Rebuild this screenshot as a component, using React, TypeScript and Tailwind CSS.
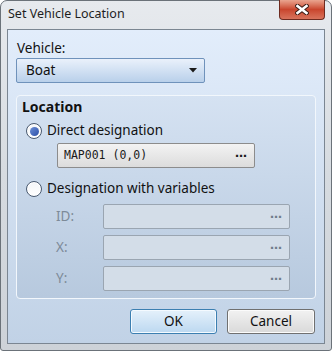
import React from 'react'

const ui = { fontFamily: '"Noto Sans", "Open Sans", sans-serif' }
const mono = { fontFamily: '"DejaVu Sans Mono", "Liberation Mono", monospace' }
const dots = { fontFamily: '"DejaVu Sans", sans-serif' }

function Radio({ checked }: { checked: boolean }) {
  return (
    <div className="w-[16px] h-[16px] rounded-full border border-[#4a5a70] bg-gradient-to-b from-[#f4f6f9] to-[#ffffff] flex items-center justify-center shadow-[inset_0_0_0_1px_#ffffff]">
      {checked && (
        <div className="w-[9px] h-[9px] rounded-full bg-gradient-to-br from-[#6c8fd8] to-[#2d4fa6]" />
      )}
    </div>
  )
}

function RefField({ text, disabled }: { text?: string; disabled?: boolean }) {
  return (
    <div
      className={`h-[25px] flex items-center justify-between pl-[6px] pr-[7px] rounded-[2px] border ${
        disabled
          ? 'border-[#9aa5b1] bg-[#d3dde8] text-[#6f7c8a]'
          : 'border-[#8c8c8c] bg-gradient-to-b from-[#f3f3f3] to-[#dcdcdc] text-[#1a1a1a]'
      }`}
    >
      <span className="text-[11.5px] leading-none" style={mono}>
        {text}
      </span>
      <span className="pb-[5px] text-[12px] font-bold leading-none" style={dots}>
        …
      </span>
    </div>
  )
}

export default function App() {
  return (
    <div className="w-[332px] h-[351px] bg-white" style={ui}>
      <div className="w-full h-full border border-[#6b7279] rounded-t-[7px] rounded-b-[3px] px-[6px] pb-[6px] flex flex-col bg-gradient-to-b from-[#e7eaee] via-[#d6dbe0] to-[#cdd2d8]">
        {/* Title bar */}
        <div className="h-[28px] flex items-start justify-between">
          <span className="pl-[1px] pt-[5px] text-[12.5px] leading-[16px] text-[#1e1e1e]">Set Vehicle Location</span>
          <div className="-mt-[1px] w-[46px] h-[20px] rounded-b-[4px] border border-[#6e2b20] border-t-0 bg-gradient-to-b from-[#e9a48f] via-[#c9452d] to-[#d8735c] flex items-center justify-center">
            <svg width="14" height="11" viewBox="0 0 14 11">
              <path d="M2.5 2 L11.5 9 M11.5 2 L2.5 9" stroke="#3a1a14" strokeWidth="4.5" strokeLinecap="square" />
              <path d="M2.5 2 L11.5 9 M11.5 2 L2.5 9" stroke="#ffffff" strokeWidth="2.6" strokeLinecap="square" />
            </svg>
          </div>
        </div>

        {/* Client area */}
        <div className="flex-1 border border-[#7b8692] bg-gradient-to-b from-[#e2edfb] to-[#c1d2e6] px-[8px] flex flex-col">
          <div className="mt-[9px] h-[18px] pl-[1px] text-[13.5px] leading-[18px] text-[#111]">Vehicle:</div>
          <div className="mt-[1px] w-[189px] h-[25px] rounded-[2px] border border-[#6f92bb] bg-gradient-to-b from-[#eaf1fb] to-[#b9d0ea] flex items-center justify-between pl-[9px] pr-[7px]">
            <span className="text-[13.5px] leading-none text-[#111]">Boat</span>
            <svg width="8" height="5" viewBox="0 0 8 5">
              <path d="M0 0 H8 L4 4.5 Z" fill="#1a1a1a" />
            </svg>
          </div>

          {/* Location group */}
          <div className="mt-[12px] h-[204px] rounded-[4px] border border-[#f2f7fc] bg-gradient-to-b from-[#d5e2f2] to-[#b7c9de] px-[9px] pt-[2px] flex flex-col">
            <div className="h-[18px] -ml-[4px] text-[14px] font-bold leading-[18px] text-[#111]">Location</div>
            <div className="mt-[5px] h-[20px] flex items-center gap-[5px]">
              <Radio checked />
              <span className="text-[13.5px] leading-none text-[#111]">Direct designation</span>
            </div>
            <div className="mt-[2px] ml-[31px] w-[198px]">
              <RefField text="MAP001 (0,0)" />
            </div>
            <div className="mt-[11px] h-[20px] flex items-center gap-[5px]">
              <Radio checked={false} />
              <span className="text-[13.5px] leading-none text-[#111]">Designation with variables</span>
            </div>
            <div className="mt-[5px] flex flex-col gap-[6px]">
              {['ID:', 'X:', 'Y:'].map((l) => (
                <div key={l} className="flex items-center">
                  <span className="w-[77px] pl-[30px] text-[13.5px] leading-none text-[#7d8a98]">{l}</span>
                  <div className="w-[187px]">
                    <RefField disabled />
                  </div>
                </div>
              ))}
            </div>
          </div>

          {/* Buttons */}
          <div className="mt-[10px] flex justify-end gap-[10px] pr-[1px]">
            <button className="w-[87px] h-[25px] rounded-[3px] border border-[#3c7fb1] bg-gradient-to-b from-[#e5f1fb] to-[#bcd8f0] text-[13.5px] leading-none text-[#111] shadow-[inset_0_0_0_1px_#f4faff]">
              OK
            </button>
            <button className="w-[88px] h-[25px] rounded-[3px] border border-[#707070] bg-gradient-to-b from-[#f2f2f2] to-[#d9d9d9] text-[13.5px] leading-none text-[#111] shadow-[inset_0_0_0_1px_#fbfbfb]">
              Cancel
            </button>
          </div>
        </div>
      </div>
    </div>
  )
}
